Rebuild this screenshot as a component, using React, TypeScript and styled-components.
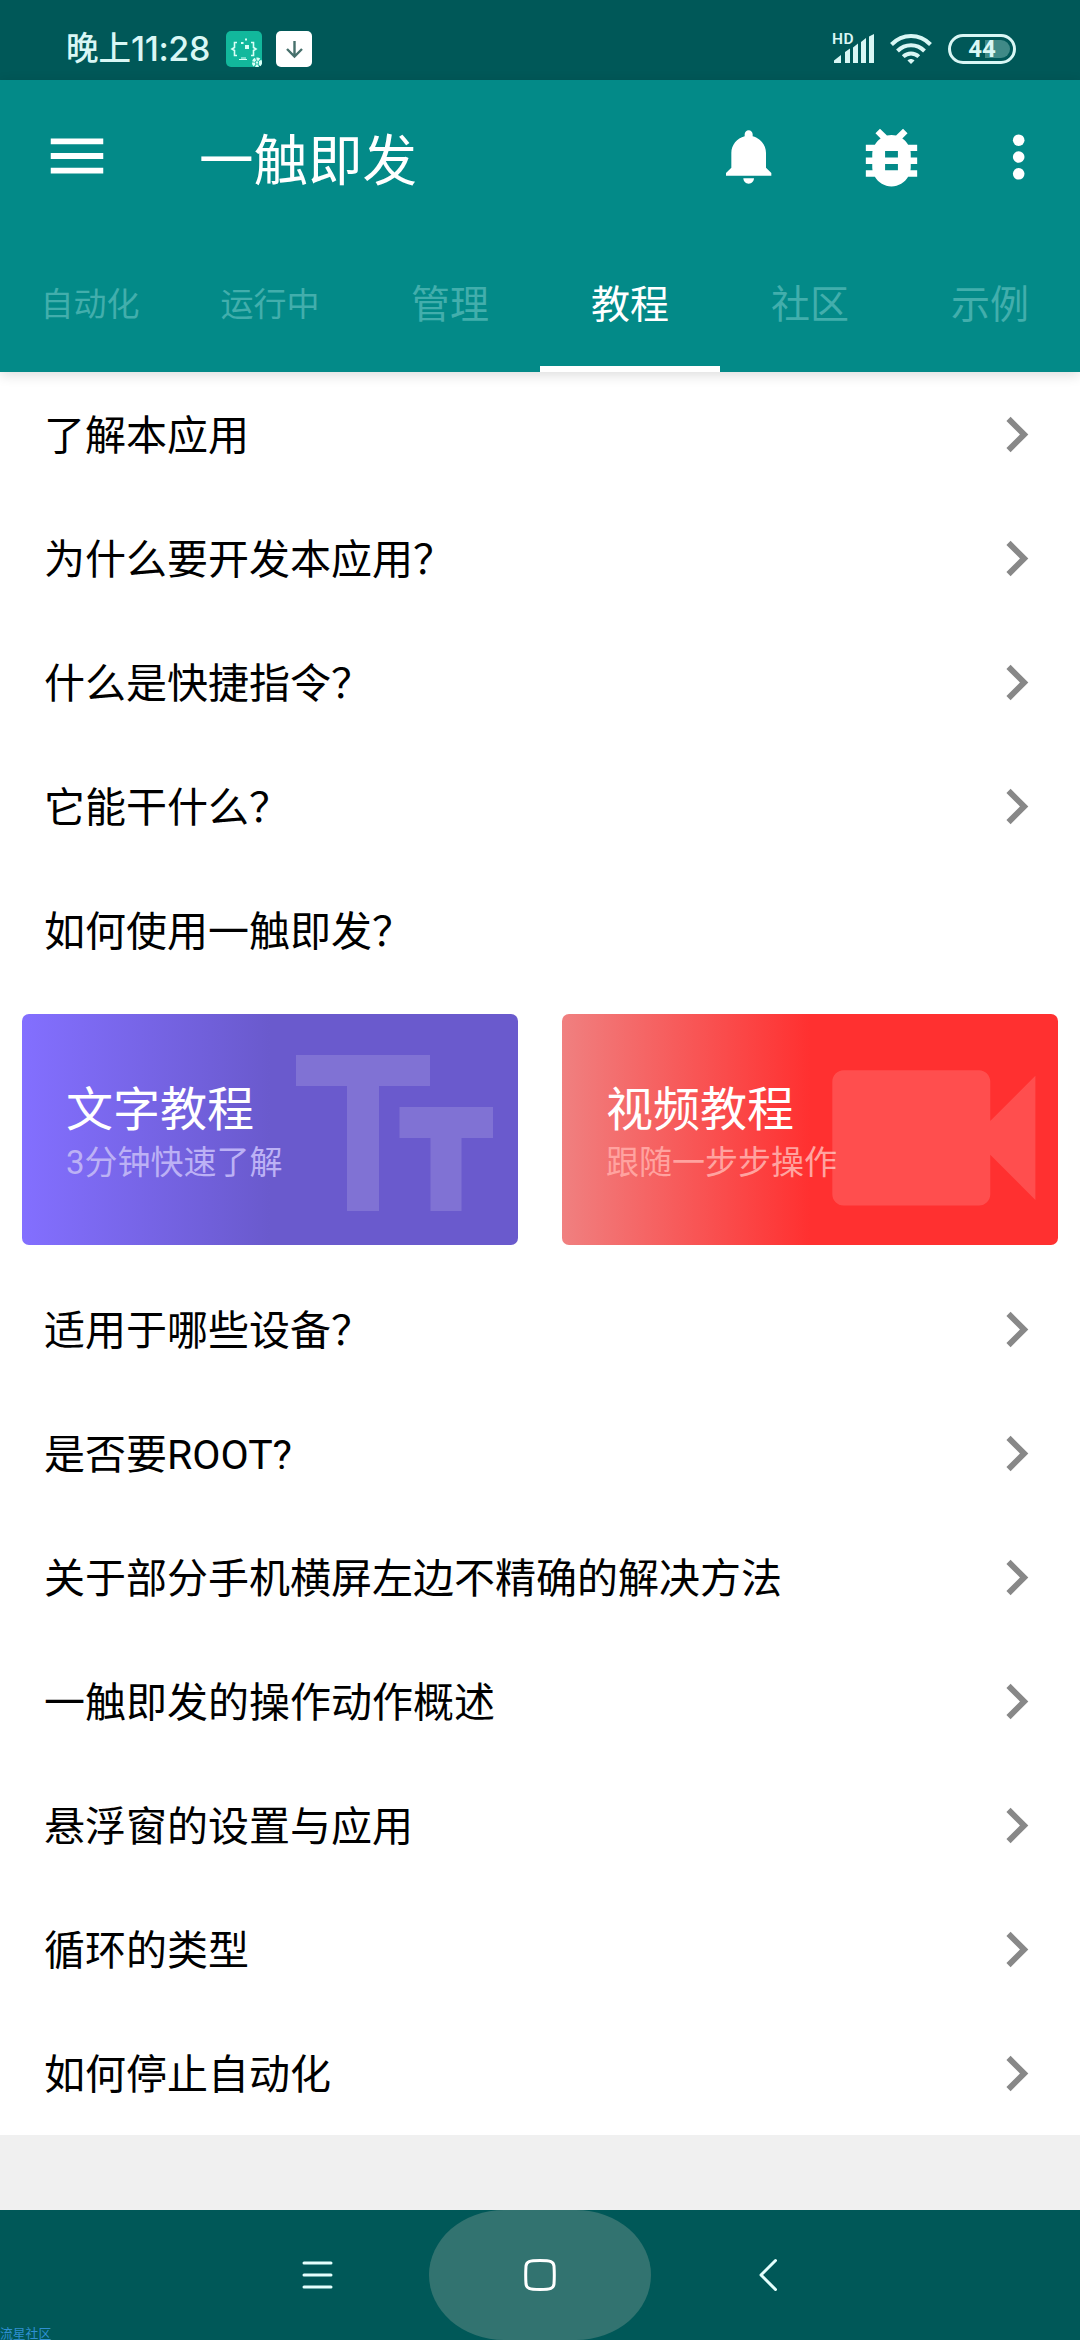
import React from "react";
import styled, { createGlobalStyle, css } from "styled-components";

const Global = createGlobalStyle`
  *, *::before, *::after { box-sizing: border-box; }
  body { margin: 0; background: #f0f0f0; }
  svg { display: block; flex: none; }
`;

const Screen = styled.div`
  width: 1080px;
  height: 2340px;
  position: relative;
  overflow: hidden;
  display: flex;
  flex-direction: column;
  background: #f0f0f0;
  font-family: Roboto, "Noto Sans CJK SC", sans-serif;
`;

/* ---------- status bar ---------- */

const StatusBar = styled.div`
  height: 80px;
  flex: none;
  display: flex;
  justify-content: space-between;
  padding: 0 64px 0 66px;
  background: #005858;
  color: #d9f7f5;
`;

const StatusGroup = styled.div`
  display: flex;
  align-items: center;
  padding-top: 18px;
`;

const Clock = styled.span`
  width: 160px;
  display: flex;
  align-items: center;
  font-size: 32.5px;
  font-weight: 500;
  line-height: 36px;
  white-space: nowrap;
`;

const ClockDigits = styled.span`
  font-family: Inter, sans-serif;
  font-size: 34px;
  font-weight: 550;
  letter-spacing: -0.4px;
`;

const Tile = styled.div<{ $bg: string }>`
  width: 36px;
  height: 36px;
  border-radius: 5px;
  margin-right: 14px;
  background: ${(p) => p.$bg};
`;

const Signal = styled.div`
  position: relative;
  width: 41px;
  height: 30px;
  margin-right: 16px;
`;

const HdLabel = styled.span`
  position: absolute;
  left: -1px;
  top: -3px;
  font-size: 15.5px;
  font-weight: 600;
  line-height: 16px;
  letter-spacing: 0.5px;
`;

const Battery = styled.div`
  width: 68px;
  height: 30px;
  margin-left: 16px;
  border: 3px solid #d9f7f5;
  border-radius: 15px;
  padding: 3px;
  display: flex;
  justify-content: flex-end;
  position: relative;
`;

const BatteryFill = styled.div`
  width: 25px;
  height: 18px;
  border-radius: 0 9px 9px 0;
  background: #408a87;
`;

const BatteryText = styled.span`
  position: absolute;
  inset: 0;
  text-align: center;
  font-size: 24px;
  line-height: 25px;
  font-weight: 700;
`;

/* ---------- app bar ---------- */

const AppBar = styled.header`
  height: 292px;
  flex: none;
  display: flex;
  flex-direction: column;
  background: #038a88;
  box-shadow: 0 3px 12px rgba(0, 0, 0, 0.14);
  z-index: 1;
`;

const Toolbar = styled.div`
  height: 156px;
  display: flex;
  align-items: center;
  padding: 0 26px 0 42px;
  color: #fff;
`;

const MenuIcon = styled.svg`
  margin-bottom: 5px;
`;

const Title = styled.h1`
  margin: 0 auto 0 87px;
  padding-top: 5px;
  font-size: 54.5px;
  font-weight: 400;
  line-height: 72px;
`;

const Actions = styled.div`
  display: flex;
  align-items: center;
  padding-bottom: 2px;
`;

const BugIcon = styled.svg`
  margin: 0 54px 0 71px;
`;

const TabRow = styled.nav`
  flex: 1;
  display: grid;
  grid-template-columns: repeat(6, 180px);
`;

const Tab = styled.button<{ $active?: boolean; $small?: boolean }>`
  border: 0;
  border-bottom: 6px solid transparent;
  background: none;
  padding: 8px 0 0;
  font: inherit;
  font-size: ${(p) => (p.$small ? 33 : 39)}px;
  line-height: 50px;
  color: #42aeac;
  ${(p) =>
    p.$active &&
    css`
      color: #fff;
      border-bottom-color: #fff;
    `}
`;

/* ---------- list ---------- */

const List = styled.main`
  background: #fff;
`;

const Row = styled.div`
  height: 124px;
  display: flex;
  align-items: center;
  justify-content: space-between;
  padding: 0 28px 0 44px;
  font-size: 41px;
  line-height: 60px;
  color: #000;
`;

const RowLabel = styled.span`
  padding-top: 3px;
`;

const CardRow = styled.div`
  display: grid;
  grid-template-columns: 1fr 1fr;
  gap: 44px;
  padding: 22px;
`;

const Card = styled.section<{ $from: string; $to: string }>`
  position: relative;
  height: 231px;
  overflow: hidden;
  border-radius: 7px;
  padding: 67px 0 0 44px;
  color: #fff;
  background: linear-gradient(90deg, ${(p) => p.$from}, ${(p) => p.$to} 50%);
`;

const CardTitle = styled.div`
  font-size: 47px;
  line-height: 58px;
`;

const CardSub = styled.div<{ $color: string }>`
  font-size: 33px;
  line-height: 48px;
  color: ${(p) => p.$color};
`;

const CardArt = styled.svg`
  position: absolute;
  left: 0;
  top: 0;
`;

/* ---------- navigation bar ---------- */

const NavBar = styled.footer`
  height: 130px;
  margin-top: auto;
  display: grid;
  grid-template-columns: 222px 222px 222px;
  justify-content: center;
  background: #005858;
`;

const NavButton = styled.button<{ $pressed?: boolean }>`
  border: 0;
  padding: 0;
  display: flex;
  align-items: center;
  justify-content: center;
  border-radius: 75px / 65px;
  background: ${(p) => (p.$pressed ? "#327370" : "none")};
`;

const Watermark = styled.span`
  position: absolute;
  left: 0;
  bottom: 0;
  font-size: 12.8px;
  line-height: 13px;
  color: #2f90d2;
`;

const Chevron = () => (
  <svg width="71" height="71" viewBox="0 0 24 24" fill="#888">
    <path d="M10 6 8.59 7.41 13.17 12l-4.58 4.59L10 18l6-6z" />
  </svg>
);

const tabs = [
  { label: "自动化", small: true },
  { label: "运行中", small: true },
  { label: "管理" },
  { label: "教程", active: true },
  { label: "社区" },
  { label: "示例" },
];

const intro = ["了解本应用", "为什么要开发本应用？", "什么是快捷指令？", "它能干什么？"];

const more = [
  "适用于哪些设备？",
  "是否要ROOT?",
  "关于部分手机横屏左边不精确的解决方法",
  "一触即发的操作动作概述",
  "悬浮窗的设置与应用",
  "循环的类型",
  "如何停止自动化",
];

const LinkRow = ({ label }: { label: string }) => (
  <Row>
    <RowLabel>{label}</RowLabel>
    <Chevron />
  </Row>
);

export default function App() {
  return (
    <Screen>
      <Global />
      <StatusBar>
        <StatusGroup>
          <Clock>
            晚上<ClockDigits>11:28</ClockDigits>
          </Clock>
          <Tile $bg="#12b89c">
            <svg width="36" height="36" viewBox="0 0 36 36" fill="none" stroke="#d9fff6" strokeWidth="1.6">
              <path d="M11 11.5H8.5v5L6 18l2.500 1.500v5H11M25 11.500h2.500v5L30 18l-2.500 1.500v5H25" />
              <path d="M13 28.500h8M15 27h5" strokeWidth="1.200" />
              <path d="M19 14h4v4h-4zM15 11h2.500v2H15zM19 7.500h2v2h-2z" fill="#d9fff6" stroke="none" />
              <circle cx="31" cy="31.500" r="3.600" strokeWidth="3" strokeDasharray="3 1" />
              <circle cx="31" cy="31.500" r="1.200" fill="#d9fff6" stroke="none" />
            </svg>
          </Tile>
          <Tile $bg="#fff">
            <svg width="36" height="36" viewBox="0 0 36 36" fill="none" stroke="#47706c" strokeWidth="2.400">
              <path d="M18.500 10v15M11 18l7.500 7.500L26 18" />
            </svg>
          </Tile>
        </StatusGroup>
        <StatusGroup>
          <Signal>
            <HdLabel>HD</HdLabel>
            <svg width="41" height="30" viewBox="0 0 41 30" fill="#d9f7f5">
              <path d="M1 29v-2.500l7-5.500v8zM12 29V18l5-3.500V29zM20 29V13.500l5-4V29zM28 29V8l5-4v25zM36 29V2.500L41 0v29z" />
            </svg>
          </Signal>
          <svg width="42" height="30" viewBox="0 0 42 30" fill="none" stroke="#d9f7f5" strokeWidth="4">
            <path d="M1.500 10.500C12.500-.8 29.500-.8 40.500 10.500M7.500 17c7.700-7.700 19.300-7.700 27 0M13.200 22.600c4.600-4.300 11-4.300 15.600 0" />
            <path d="M17.500 26.500c2-2 5-2 7 0L21 30z" fill="#d9f7f5" stroke="none" />
          </svg>
          <Battery>
            <BatteryFill />
            <BatteryText>44</BatteryText>
          </Battery>
        </StatusGroup>
      </StatusBar>

      <AppBar>
        <Toolbar>
          <MenuIcon width="70" height="70" viewBox="0 0 24 24" fill="#fff">
            <path d="M3 18h18v-2H3v2zm0-5h18v-2H3v2zm0-7v2h18V6H3z" />
          </MenuIcon>
          <Title>一触即发</Title>
          <Actions>
            <svg width="64" height="64" viewBox="0 0 24 24" fill="#fff">
              <path d="M11.500 22c1.100 0 2-.9 2-2h-4c0 1.100.9 2 2 2zm6.500-6v-5.500c0-3.070-2.130-5.640-5-6.320V3.500c0-.83-.67-1.500-1.500-1.500S10 2.670 10 3.500v.68c-2.870.68-5 3.250-5 6.320V16l-2 2v1h17v-1l-2-2z" />
            </svg>
            <BugIcon width="77" height="77" viewBox="0 0 24 24" fill="#fff">
              <path d="M20 8h-2.810c-.45-.78-1.070-1.450-1.820-1.960L17 4.410 15.590 3l-2.170 2.170C12.960 5.060 12.490 5 12 5c-.49 0-.96.06-1.410.17L8.410 3 7 4.410l1.620 1.630C7.880 6.550 7.260 7.220 6.810 8H4v2h2.090c-.05.33-.09.66-.09 1v1H4v2h2v1c0 .34.04.67.09 1H4v2h2.810c1.040 1.790 2.970 3 5.190 3s4.150-1.210 5.190-3H20v-2h-2.090c.05-.33.09-.66.09-1v-1h2v-2h-2v-1c0-.34-.04-.67-.09-1H20V8zm-6 8h-4v-2h4v2zm0-4h-4v-2h4v2z" />
            </BugIcon>
            <svg width="70" height="70" viewBox="0 0 70 70" fill="#fff">
              <circle cx="34.700" cy="18.200" r="5.800" />
              <circle cx="34.700" cy="35" r="5.800" />
              <circle cx="34.700" cy="51.800" r="5.800" />
            </svg>
          </Actions>
        </Toolbar>
        <TabRow>
          {tabs.map((t) => (
            <Tab key={t.label} $active={t.active} $small={t.small}>
              {t.label}
            </Tab>
          ))}
        </TabRow>
      </AppBar>

      <List>
        {intro.map((label) => (
          <LinkRow key={label} label={label} />
        ))}
        <Row>
          <RowLabel>如何使用一触即发？</RowLabel>
        </Row>
        <CardRow>
          <Card $from="#836fff" $to="#6a5acd">
            <CardArt width="496" height="231" viewBox="22 1014 496 231" fill="rgba(255,255,255,0.150)">
              <path d="M296 1055h134v31h-51v125h-32v-125h-51zM399.500 1107H493v31h-31.500v73h-31v-73h-31z" />
            </CardArt>
            <CardTitle>文字教程</CardTitle>
            <CardSub $color="#bcb1f5">3分钟快速了解</CardSub>
          </Card>
          <Card $from="#f08080" $to="#ff3030">
            <CardTitle>视频教程</CardTitle>
            <CardSub $color="#ffa3a0">跟随一步步操作</CardSub>
            <CardArt width="496" height="231" viewBox="562 1014 496 231" fill="rgba(255,255,255,0.150)">
              <path
                transform="translate(798.500 1002.500) scale(11.280)"
                d="M17 10.500V7c0-.55-.45-1-1-1H4c-.55 0-1 .45-1 1v10c0 .55.45 1 1 1h12c.55 0 1-.45 1-1v-3.500l4 4v-11l-4 4z"
              />
            </CardArt>
          </Card>
        </CardRow>
        {more.map((label) => (
          <LinkRow key={label} label={label} />
        ))}
      </List>

      <NavBar>
        <NavButton>
          <svg width="34" height="34" viewBox="0 0 34 34" stroke="#e4fffd" strokeWidth="3" strokeLinecap="round">
            <path d="M3 5h27M3 17h27M3 29h27" />
          </svg>
        </NavButton>
        <NavButton $pressed>
          <svg width="34" height="34" viewBox="0 0 34 34" fill="none" stroke="#fff" strokeWidth="3">
            <path d="M17 2.500c11 0 13.500 1 14 5.500q.6 9 0 18c-.5 4.500-3 5.500-14 5.500S3.500 30.500 3 26q-.6-9 0-18c.5-4.500 3-5.500 14-5.500z" />
          </svg>
        </NavButton>
        <NavButton>
          <svg width="34" height="34" viewBox="0 0 34 34" fill="none" stroke="#e4fffd" strokeWidth="3" strokeLinecap="round" strokeLinejoin="round">
            <path d="M30.500 2.500 16 17l14.500 14.500" />
          </svg>
        </NavButton>
      </NavBar>
      <Watermark>流星社区</Watermark>
    </Screen>
  );
}
